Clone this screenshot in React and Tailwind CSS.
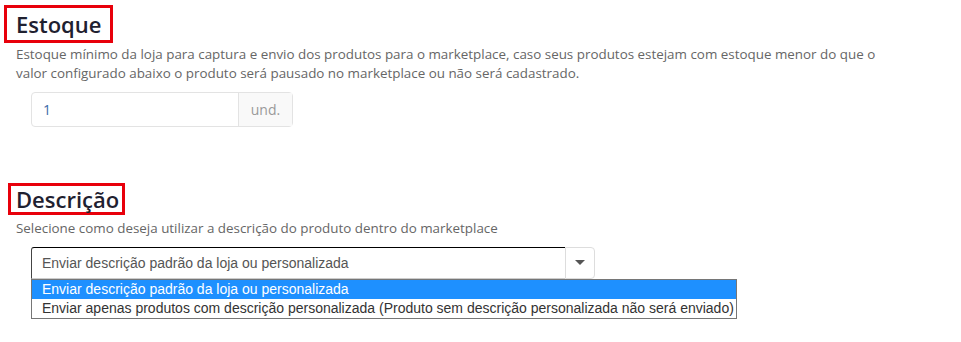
import React from "react";

const sans = { fontFamily: '"Open Sans", sans-serif' };
const arial = { fontFamily: '"Liberation Sans", Arial, sans-serif' };

export default function App() {
  return (
    <div
      className="w-[961px] h-[342px] bg-white text-[#333] overflow-hidden"
      style={sans}
    >
      {/* Estoque */}
      <div className="pt-[5px]">
        <h2 className="ml-[4px] inline-block w-[109px] h-[38px] border-[3px] border-[#e8000b] pl-[9px] text-[22px] font-semibold leading-[32px] text-[#1f2130]">
          Estoque
        </h2>
        <p className="ml-[16px] mt-[2px] w-[880px] text-[13.4px] leading-[19px] text-[#666]">
          Estoque mínimo da loja para captura e envio dos produtos para o
          marketplace, caso seus produtos estejam com estoque menor do que o
          valor configurado abaixo o produto será pausado no marketplace ou não
          será cadastrado.
        </p>
        <div className="ml-[31px] mt-[9px] flex w-[262px] h-[35px] rounded border border-[#e3e3e3]">
          <div className="flex-1 flex items-center pl-[11px] text-[14px] text-[#3b6aa8]">
            1
          </div>
          <div className="w-[54px] flex items-center justify-center border-l border-[#e3e3e3] bg-[#f9f9f9] text-[14px] text-[#999]">
            und.
          </div>
        </div>
      </div>

      {/* Descrição */}
      <div className="mt-[56px]">
        <h2 className="ml-[8px] inline-block w-[117px] h-[32px] border-[3px] border-[#e8000b] pl-[5px] text-[22px] font-semibold leading-[26px] text-[#1f2130]">
          Descrição
        </h2>
        <p className="ml-[16px] mt-[4px] text-[13.4px] leading-[19px] text-[#666]">
          Selecione como deseja utilizar a descrição do produto dentro do
          marketplace
        </p>
        <div className="ml-[31px] mt-[9px] w-[706px]">
          <div className="flex w-[564px] h-[32px]">
            <div
              className="flex-1 flex items-center pl-[10px] border-t border-l border-t-black border-l-[#444] border-b border-b-[#ccc] rounded-tl-[3px] text-[14px] text-[#555]"
              style={arial}
            >
              Enviar descrição padrão da loja ou personalizada
            </div>
            <div className="w-[30px] flex items-center justify-center border border-[#ddd] rounded-r">
              <svg width="10" height="6" viewBox="0 0 10 6">
                <path d="M0 0h10L5 5z" fill="#555" />
              </svg>
            </div>
          </div>
          <ul
            className="border border-[#767676] text-[14px] leading-[19px]"
            style={arial}
          >
            <li className="bg-[#1e90ff] text-white pl-[10px]">
              Enviar descrição padrão da loja ou personalizada
            </li>
            <li className="text-[#333] pl-[10px]">
              Enviar apenas produtos com descrição personalizada (Produto sem
              descrição personalizada não será enviado)
            </li>
          </ul>
        </div>
      </div>
    </div>
  );
}
